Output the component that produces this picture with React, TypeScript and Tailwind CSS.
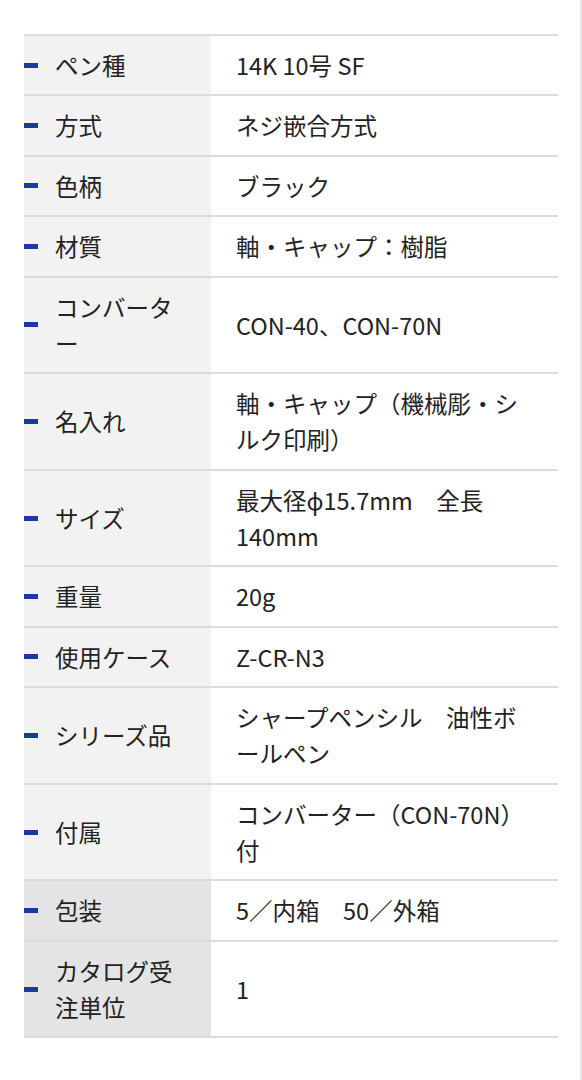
const specs: { label: string; value: string; dark?: boolean }[] = [
  { label: "ペン種", value: "14K 10号 SF" },
  { label: "方式", value: "ネジ嵌合方式" },
  { label: "色柄", value: "ブラック" },
  { label: "材質", value: "軸・キャップ：樹脂" },
  { label: "コンバーター", value: "CON-40、CON-70N" },
  { label: "名入れ", value: "軸・キャップ（機械彫・シルク印刷）" },
  { label: "サイズ", value: "最大径ϕ15.7mm　全長140mm" },
  { label: "重量", value: "20g" },
  { label: "使用ケース", value: "Z-CR-N3" },
  { label: "シリーズ品", value: "シャープペンシル　油性ボールペン" },
  { label: "付属", value: "コンバーター（CON-70N）付" },
  { label: "包装", value: "5／内箱　50／外箱", dark: true },
  { label: "カタログ受注単位", value: "1", dark: true },
];

export default function App() {
  return (
    <div className="flex min-h-[1080px] bg-white">
      <div
        className="flex-1 pt-[34px] pl-[24px] pr-[22px] text-[#222] text-[23.5px] leading-[36.2px]"
        style={{ fontFamily: '"Noto Sans CJK JP", "Noto Sans", sans-serif' }}
      >
        <div className="border-t-2 border-[#dcdcdc]">
          {specs.map((row, i) => (
            <div key={i} className="flex border-b-2 border-[#dcdcdc]">
              <div
                className={`w-[187px] shrink-0 flex items-center py-[11.1px] pr-[18px] ${
                  row.dark ? "bg-[#e4e4e4]" : "bg-[#f2f2f2]"
                }`}
              >
                <span className="w-[14px] h-[5px] bg-[#1c3a96] shrink-0" />
                <span className="ml-[17px] min-w-0">{row.label}</span>
              </div>
              <div className="flex-1 flex items-center py-[11.1px] pl-[25px] pr-[32px] bg-white">
                {row.value}
              </div>
            </div>
          ))}
        </div>
      </div>
      <div className="w-[2px] bg-[#e6e6e6]" />
    </div>
  );
}
